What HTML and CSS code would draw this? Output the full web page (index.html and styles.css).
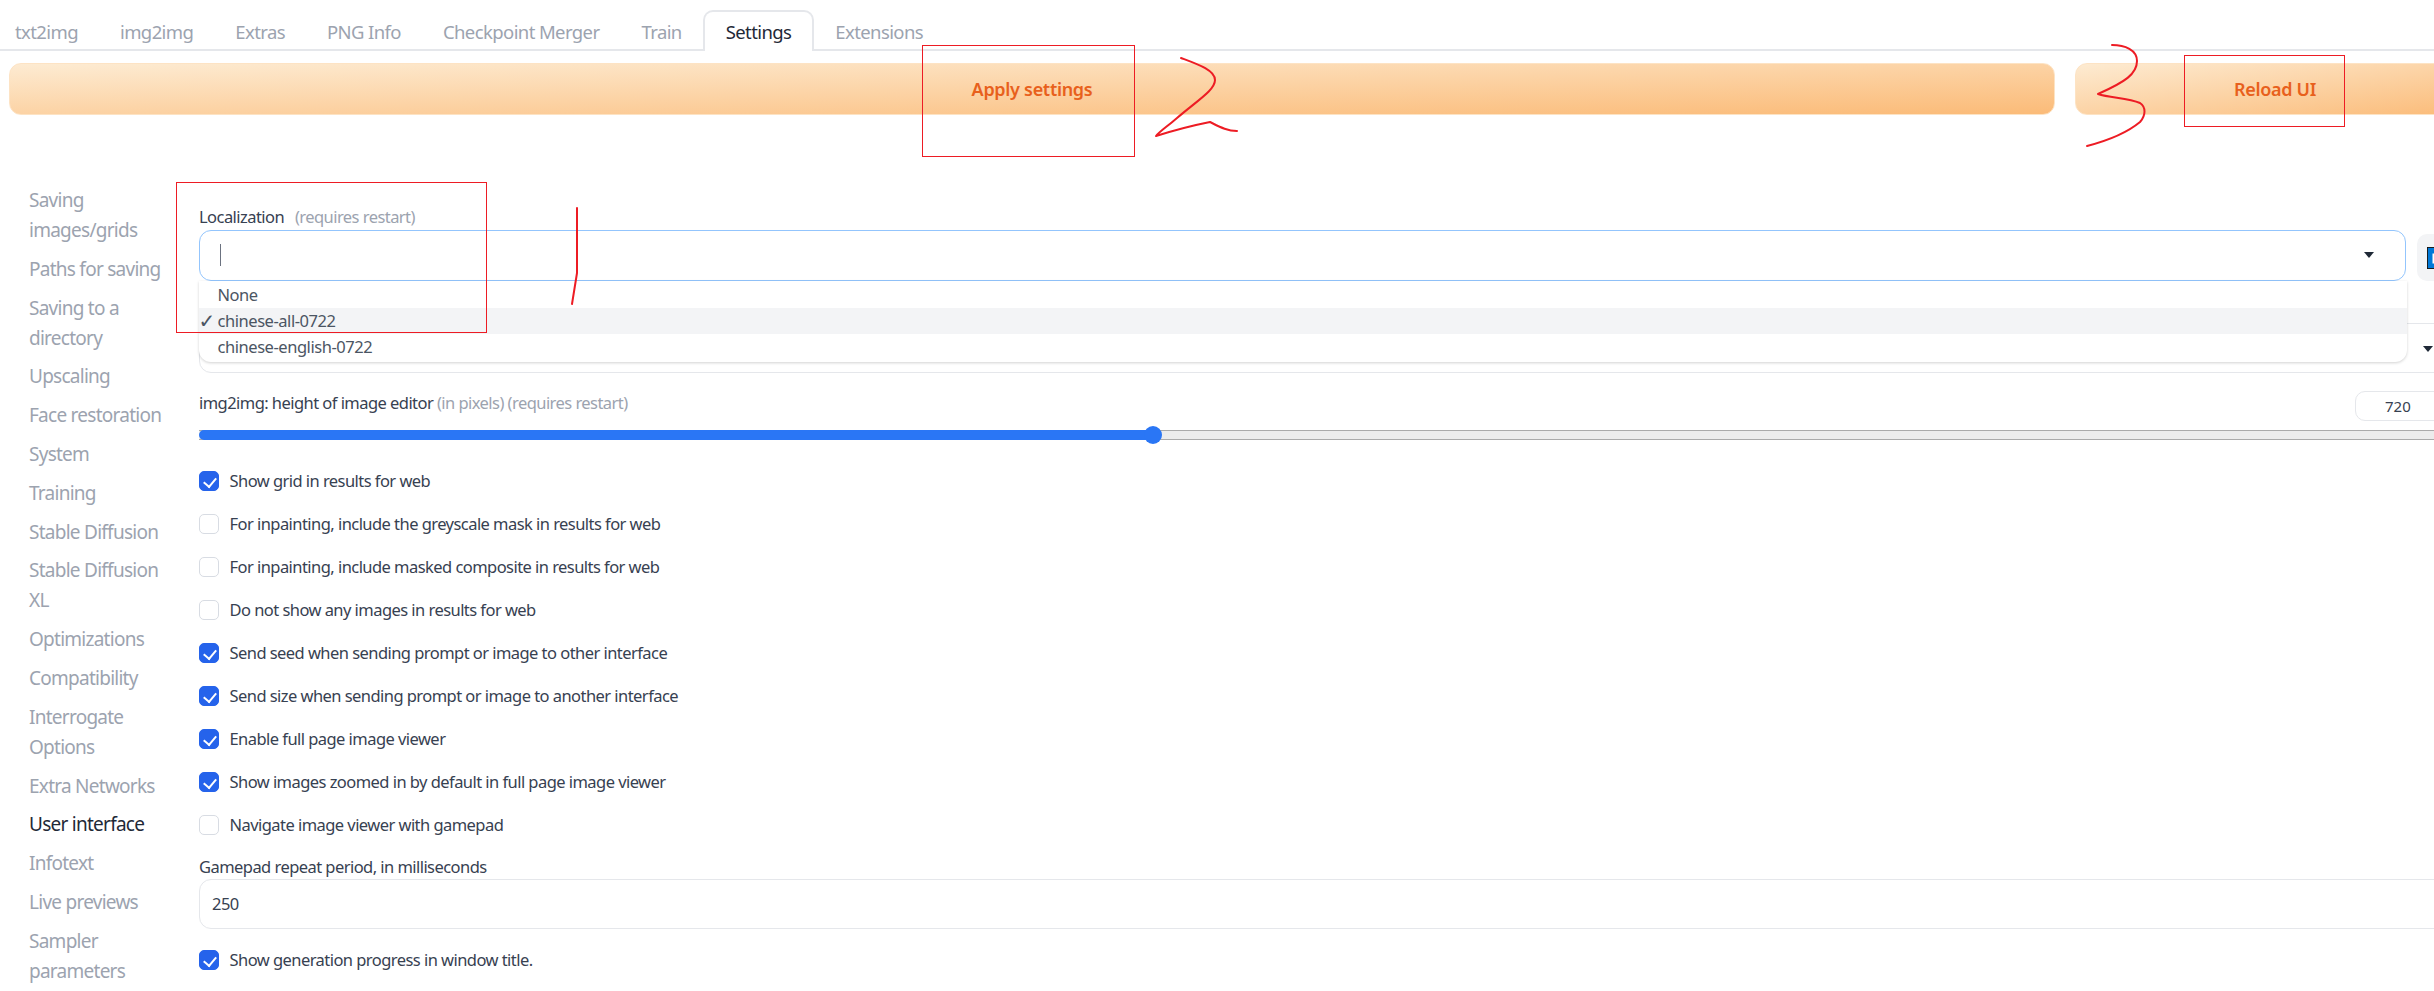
FILE: index.html
```html
<!DOCTYPE html>
<html lang="en">
<head>
<meta charset="utf-8">
<title>Settings</title>
<link rel="stylesheet" href="styles.css">
</head>
<body>
<div class="app">
  <nav class="tabs">
    <button class="tab first">txt2img</button>
    <button class="tab">img2img</button>
    <button class="tab">Extras</button>
    <button class="tab">PNG Info</button>
    <button class="tab">Checkpoint Merger</button>
    <button class="tab">Train</button>
    <button class="tab active">Settings</button>
    <button class="tab">Extensions</button>
  </nav>
  <div class="actions">
    <button class="primary apply">Apply settings</button>
    <button class="primary reload">Reload UI</button>
  </div>
  <div class="settings">
    <aside class="side">
      <a class="side-item">Saving images/grids</a>
      <a class="side-item">Paths for saving</a>
      <a class="side-item">Saving to a directory</a>
      <a class="side-item">Upscaling</a>
      <a class="side-item">Face restoration</a>
      <a class="side-item">System</a>
      <a class="side-item">Training</a>
      <a class="side-item">Stable Diffusion</a>
      <a class="side-item">Stable Diffusion XL</a>
      <a class="side-item">Optimizations</a>
      <a class="side-item">Compatibility</a>
      <a class="side-item">Interrogate Options</a>
      <a class="side-item">Extra Networks</a>
      <a class="side-item current">User interface</a>
      <a class="side-item">Infotext</a>
      <a class="side-item">Live previews</a>
      <a class="side-item">Sampler parameters</a>
    </aside>
    <main class="panel">
      <div class="field localization">
        <div class="label">Localization <span class="hint hint-gap">(requires restart)</span></div>
        <div class="select-row">
          <div class="select focused">
            <span class="caret"></span>
            <span class="arrow"></span>
            <ul class="menu">
              <li>None</li>
              <li class="selected"><span class="tick">✓</span>chinese-all-0722</li>
              <li>chinese-english-0722</li>
            </ul>
          </div>
          <button class="refresh" aria-label="Refresh">
            <svg class="refresh-icon" viewBox="0 0 24 24"><rect x="0.5" y="0.5" width="23" height="23" fill="#0078d7" stroke="#111"/><path d="M7 7h8l3 3v8H6V7z" fill="#fff"/><rect x="9" y="7" width="5" height="4" fill="#0078d7"/></svg>
          </button>
        </div>
      </div>
      <div class="select under"><span class="arrow"></span></div>
      <div class="slider-field">
        <div class="slider-head">
          <div class="label">img2img: height of image editor <span class="hint">(in pixels) (requires restart)</span></div>
          <div class="number">720</div>
        </div>
        <div class="track"><div class="fill"></div><div class="thumb"></div></div>
      </div>
      <div class="checks">
        <label class="check"><span class="box on"></span>Show grid in results for web</label>
        <label class="check"><span class="box"></span>For inpainting, include the greyscale mask in results for web</label>
        <label class="check"><span class="box"></span>For inpainting, include masked composite in results for web</label>
        <label class="check"><span class="box"></span>Do not show any images in results for web</label>
        <label class="check"><span class="box on"></span>Send seed when sending prompt or image to other interface</label>
        <label class="check"><span class="box on"></span>Send size when sending prompt or image to another interface</label>
        <label class="check"><span class="box on"></span>Enable full page image viewer</label>
        <label class="check"><span class="box on"></span>Show images zoomed in by default in full page image viewer</label>
        <label class="check"><span class="box"></span>Navigate image viewer with gamepad</label>
      </div>
      <div class="field gamepad">
        <div class="label">Gamepad repeat period, in milliseconds</div>
        <div class="textbox">250</div>
      </div>
      <label class="check last"><span class="box on"></span>Show generation progress in window title.</label>
    </main>
  </div>
</div>
<svg class="marks" viewBox="0 0 2434 991" width="2434" height="991" aria-hidden="true">
  <g class="mark-box">
    <rect x="922.5" y="45.5" width="212" height="111"/>
    <rect x="2184.5" y="55.5" width="160" height="71"/>
    <rect x="176.5" y="182.5" width="310" height="150"/>
  </g>
  <g class="mark-line">
    <path d="M1181 58C1197 64 1215 70 1215 80C1215 90 1198 100 1177 118C1168 126 1160 131 1156 136C1175 130 1195 125 1210 122C1220 127 1227 131 1237 131"/>
    <path d="M2112 45C2125 45 2137 50 2137 61C2137 74 2125 82 2098 94C2110 98 2128 98 2140 103C2146 107 2146 115 2140 122C2128 132 2110 140 2087 146"/>
    <path d="M577 208L577 273L572 304"/>
  </g>
</svg>
</body>
</html>
```
FILE: styles.css
```css
* { box-sizing: border-box; }
html, body { margin: 0; height: 991px; overflow: hidden; background: #fff; }
body { font-family: "Noto Sans", "Open Sans", sans-serif; color: #374151; position: relative; }
button { font: inherit; border: 0; background: none; padding: 0; }

.app { width: 2475px; }

.tabs { display: flex; height: 51px; padding-top: 10px; border-bottom: 2px solid #e5e7eb; }
.tab { padding: 0 19px; height: 41px; font-size: 18.5px; letter-spacing: -0.6px; color: #9ca3af; border: 2px solid transparent; border-bottom: 0; border-radius: 10px 10px 0 0; white-space: nowrap; }
.tab.first { padding-left: 15px; border-left: 0; }
.tab.active { padding: 0 21px; background: #fff; color: #1f2937; border-color: #e5e7eb; }

.actions { display: flex; gap: 20px; padding: 12px 0 0 9px; }
.primary { height: 52px; border-radius: 12px; border: 1px solid #fde3c4; font-size: 18px; font-weight: 600; letter-spacing: -0.3px; color: #e8601c; background: linear-gradient(to bottom right, #fdebd2, #fbbb78); }
.apply { flex: 1; }
.reload { width: 400px; }

.settings { display: grid; grid-template-columns: 199px 1fr; }
.side { padding: 70px 0 0 29px; display: flex; flex-direction: column; gap: 8.8px; }
.side-item { display: block; width: 145px; font-size: 19px; line-height: 30px; letter-spacing: -0.74px; color: #9ca3af; }
.side-item.current { color: #1f2937; }

.panel { padding-top: 90px; font-size: 16.5px; letter-spacing: -0.55px; }
.label { line-height: 24px; color: #374151; }
.hint { color: #9ca3af; }
.hint-gap { margin-left: 7px; }

.localization { height: 118px; }
.select-row { display: flex; gap: 11px; align-items: flex-end; padding-top: 1px; }
.select { position: relative; height: 50px; background: #fff; border: 1.5px solid #e5e7eb; border-radius: 12px; }
.select.focused { flex: none; width: 2207px; height: 51px; border-color: #93c5fd; }
.caret { position: absolute; left: 20px; top: 13px; width: 1px; height: 22px; background: #6b7280; }
.arrow { position: absolute; right: 31px; top: 21px; width: 0; height: 0; border-left: 5px solid transparent; border-right: 5px solid transparent; border-top: 6px solid #1f2937; }
.menu { position: absolute; z-index: 2; left: -1.5px; right: -1.5px; top: 49.5px; height: 81px; margin: 0; padding: 1px 0 0; list-style: none; background: #fff; border-radius: 0 0 12px 12px; box-shadow: 0 1px 3px rgba(0,0,0,.18); letter-spacing: -0.45px; }
.menu li { position: relative; height: 26px; line-height: 26px; padding-left: 19px; color: #4b5563; }
.menu li.selected { background: #f3f4f6; }
.tick { position: absolute; left: 0; top: 0; font-family: "DejaVu Sans", sans-serif; font-size: 20px; }
.refresh { flex: none; width: 60px; height: 47px; background: #f3f4f6; border-radius: 10px 0 0 10px; padding: 0 0 0 10px; display: flex; align-items: center; }
.refresh-icon { width: 22px; height: 22px; flex: none; }

.select.under { margin-right: -6px; }
.select.under .arrow { right: 49px; top: 22px; }

.slider-field { padding-top: 18px; }
.slider-head { display: flex; justify-content: space-between; align-items: flex-start; height: 30px; }
.number { width: 122px; height: 30px; padding-left: 29px; line-height: 28px; font-size: 15px; letter-spacing: 0; color: #374151; background: #fff; border: 1.5px solid #e5e7eb; border-radius: 10px 0 0 10px; }
.track { position: relative; height: 10px; margin-top: 9px; background: #ececec; border-top: 1px solid #aaa; border-bottom: 1px solid #aaa; }
.fill { position: absolute; left: 0; top: -1px; height: 10px; width: 954px; background: #2a76f5; border-radius: 5px 0 0 5px; }
.thumb { position: absolute; left: 945px; top: -5px; width: 18px; height: 18px; border-radius: 50%; background: #2a76f5; }

.checks { display: flex; flex-direction: column; gap: 23px; padding-top: 31px; }
.check { display: flex; align-items: center; gap: 10.5px; height: 20px; line-height: 20px; white-space: nowrap; }
.box { flex: none; position: relative; width: 20px; height: 20px; background: #fff; border: 1.5px solid #d8dce3; border-radius: 5px; }
.box.on { background: #2563eb; border-color: #2563eb; }
.box.on::after { content: ""; position: absolute; left: 5.5px; top: 2.5px; width: 6px; height: 10px; border: solid #fff; border-width: 0 2.5px 2.5px 0; transform: rotate(40deg); }

.gamepad { padding-top: 20px; }
.gamepad .label { height: 24px; }
.textbox { height: 50px; padding-left: 12px; line-height: 48px; background: #fff; border: 1.5px solid #e5e7eb; border-radius: 12px; margin-right: -6px; color: #374151; }
.check.last { margin-top: 21px; }

.marks { position: absolute; left: 0; top: 0; z-index: 3; pointer-events: none; }
.mark-box rect { fill: none; stroke: #ed1c24; stroke-width: 1; }
.mark-line path { fill: none; stroke: #ed1c24; stroke-width: 2; stroke-linecap: round; stroke-linejoin: round; }
```
